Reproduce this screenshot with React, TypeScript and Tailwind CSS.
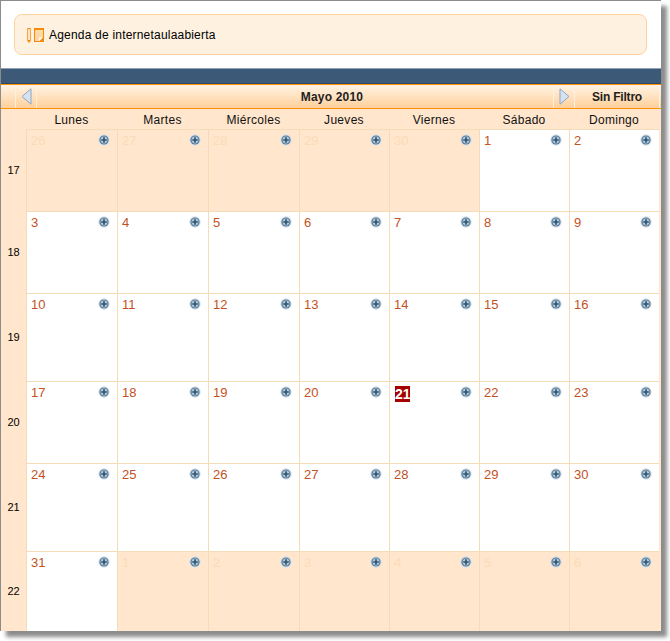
const dias = ['Lunes', 'Martes', 'Miércoles', 'Jueves', 'Viernes', 'Sábado', 'Domingo'];

const semanas = [
  { num: 17, alto: 'h-[82px]', dias: [[26, 1], [27, 1], [28, 1], [29, 1], [30, 1], [1, 0], [2, 0]] },
  { num: 18, alto: 'h-[82px]', dias: [[3, 0], [4, 0], [5, 0], [6, 0], [7, 0], [8, 0], [9, 0]] },
  { num: 19, alto: 'h-[88px]', dias: [[10, 0], [11, 0], [12, 0], [13, 0], [14, 0], [15, 0], [16, 0]] },
  { num: 20, alto: 'h-[82px]', dias: [[17, 0], [18, 0], [19, 0], [20, 0], [21, 0], [22, 0], [23, 0]] },
  { num: 21, alto: 'h-[88px]', dias: [[24, 0], [25, 0], [26, 0], [27, 0], [28, 0], [29, 0], [30, 0]] },
  { num: 22, alto: 'h-[80px]', dias: [[31, 0], [1, 1], [2, 1], [3, 1], [4, 1], [5, 1], [6, 1]] },
];

const columnas = 'grid grid-cols-[25px_91px_91px_91px_90px_90px_90px_90px]';

const IconoMas = () => (
  <svg width="12" height="12" viewBox="0 0 12 12" className="absolute right-[7px] top-[4px]">
    <circle cx="6" cy="6" r="5.7" fill="#d3e0ea" />
    <circle cx="6" cy="6" r="4.6" fill="#55799a" />
    <circle cx="6" cy="6" r="3.4" fill="#b4cad9" />
    <path d="M6 3.2v5.6M3.2 6h5.6" stroke="#2f5673" strokeWidth="1.7" />
  </svg>
);

const Flecha = ({ dir }: { dir: 'izq' | 'der' }) => (
  <svg width="11" height="17" viewBox="0 0 11 17">
    <path
      d={dir === 'izq' ? 'M10 .8V16.2L1 8.5Z' : 'M1 .8V16.2L10 8.5Z'}
      fill="#d7e2f0"
      stroke="#8fa5c4"
      strokeWidth="1"
    />
  </svg>
);

const IconoAgenda = () => (
  <svg width="18" height="16" viewBox="0 0 18 16" className="shrink-0">
    <rect x="0.75" y="1.5" width="2.5" height="12" fill="#fff" stroke="#f58a0b" />
    <path d="M.5 14h3l-1.5 2z" fill="#f58a0b" />
    <rect x="7.5" y="1.5" width="9" height="13" fill="#fdd9a8" stroke="#f58a0b" />
    <rect x="7" y="1" width="10" height="2" fill="#f58a0b" />
    <path d="M12 14.500l4.500-4.500v4.500z" fill="#f58a0b" />
    <path d="M12 14l3.500-3.500h-3.500z" fill="#fff" />
  </svg>
);

function Celda({ n, fuera }: { n: number; fuera: boolean }) {
  const hoy = n === 21 && !fuera;
  return (
    <div className={`relative border-l border-t border-[#f5dcb8] ${fuera ? 'bg-[#ffe6cc]' : 'bg-white'}`}>
      {hoy ? (
        <span className="absolute left-[5px] top-[4px] h-[16px] w-[15px] bg-[#a40000] text-center text-[14px] font-bold leading-[16px] text-white">
          {n}
        </span>
      ) : (
        <span className={`absolute left-[4px] top-[3px] text-[13px] leading-[16px] ${fuera ? 'text-[#fbdcb8]' : 'text-[#c4501e]'}`}>
          {n}
        </span>
      )}
      <IconoMas />
    </div>
  );
}

export default function App() {
  return (
    <div className="h-[641px] w-[670px] bg-white font-['Liberation_Sans',Arial,sans-serif]">
      <div className="h-[631px] w-[661px] overflow-hidden border-l border-t border-[#8c8c8c] bg-white shadow-[6px_6px_4px_rgba(0,0,0,0.45)]">
        <div className="px-[13px] pt-[13px]">
          <div className="flex h-[41px] w-[633px] items-center gap-[4px] rounded-lg border border-[#fdd2a0] bg-[#fff1e0] pl-[12px]">
            <IconoAgenda />
            <span className="text-[12px] tracking-[0.2px] text-black">Agenda de internetaulaabierta</span>
          </div>
        </div>

        <div className="mt-[13px] h-[16px] border-t border-t-[#8fa3b8] border-b border-b-[#2f4a66] bg-[#3c5a78]" />

        <div className="flex h-[25px] border-y-1 border-[#ff9000] bg-gradient-to-b from-[#fff3e4] to-[#ffd09a] text-[12px] font-bold text-[#222]">
          <div className="w-[14px]" />
          <div className="flex w-[22px] items-center justify-center border-x border-[#fff0dd]">
            <Flecha dir="izq" />
          </div>
          <div className="flex flex-1 items-center justify-center pl-[74px] tracking-[0.2px]">Mayo 2010</div>
          <div className="flex w-[22px] items-center justify-center border-x border-[#fff0dd]">
            <Flecha dir="der" />
          </div>
          <div className="flex w-[85px] items-center justify-center border-r border-[#fff0dd] tracking-[-0.2px]">Sin Filtro</div>
          <div className="w-px" />
        </div>

        <div className={`${columnas} h-[20px] bg-[#ffe6cc] text-[12px] tracking-[0.3px] text-[#111]`}>
          <div />
          {dias.map((d) => (
            <div key={d} className="text-center leading-[22px]">
              {d}
            </div>
          ))}
        </div>

        {semanas.map((s) => (
          <div key={s.num} className={`${columnas} ${s.alto} bg-[#ffe6cc]`}>
            <div className="flex items-center justify-center text-[11px] text-black">{s.num}</div>
            {s.dias.map(([n, f], i) => (
              <Celda key={i} n={n} fuera={f === 1} />
            ))}
          </div>
        ))}
      </div>
    </div>
  );
}
